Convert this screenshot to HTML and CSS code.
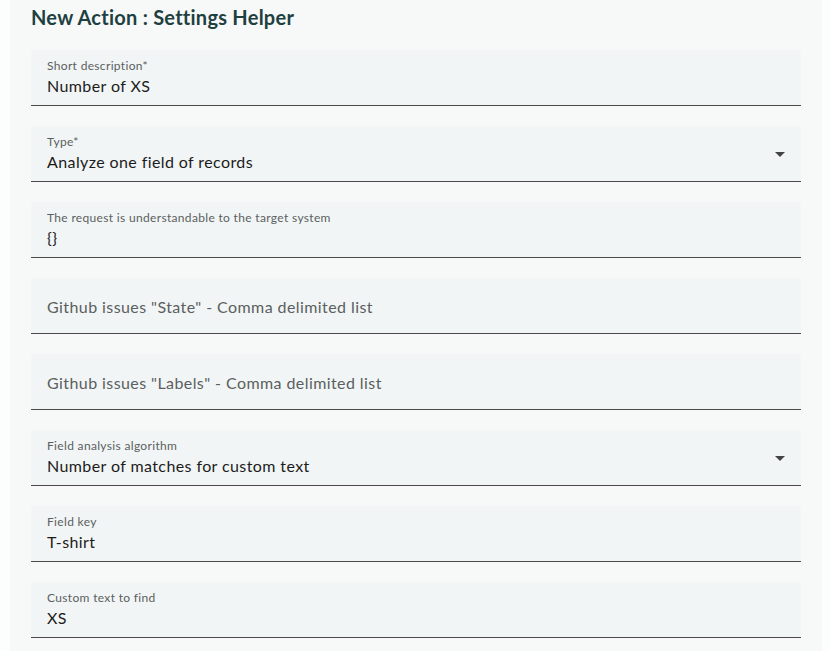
FILE: index.html
```html
<!DOCTYPE html>
<html>
<head>
<meta charset="utf-8">
<link rel="stylesheet" href="styles.css">
</head>
<body>
<div class="panel">
  <h1 class="title">New Action : Settings Helper</h1>
  <div class="field">
    <div class="label">Short description*</div>
    <div class="value">Number of XS</div>
  </div>
  <div class="field select">
    <div class="label">Type*</div>
    <div class="value">Analyze one field of records</div>
    <span class="arrow"></span>
  </div>
  <div class="field">
    <div class="label">The request is understandable to the target system</div>
    <div class="value">{}</div>
  </div>
  <div class="field empty">
    <div class="placeholder">Github issues "State" - Comma delimited list</div>
  </div>
  <div class="field empty">
    <div class="placeholder">Github issues "Labels" - Comma delimited list</div>
  </div>
  <div class="field select">
    <div class="label">Field analysis algorithm</div>
    <div class="value">Number of matches for custom text</div>
    <span class="arrow"></span>
  </div>
  <div class="field">
    <div class="label">Field key</div>
    <div class="value">T-shirt</div>
  </div>
  <div class="field">
    <div class="label">Custom text to find</div>
    <div class="value">XS</div>
  </div>
</div>
</body>
</html>
```
FILE: styles.css
```css
html, body {
  margin: 0;
  padding: 0;
  background: #fcfdfd;
  font-family: Lato, "Open Sans", sans-serif;
}
.panel {
  margin-left: 10px;
  width: 812px;
  box-sizing: border-box;
  padding: 0 21px 20px 21px;
  background: #f7f9f9;
  min-height: 651px;
}
.title {
  margin: 0;
  padding-top: 5px;
  height: 50px;
  box-sizing: border-box;
  font-size: 20px;
  font-weight: 700;
  letter-spacing: 0.25px;
  color: #1e4040;
  line-height: 24px;
}
.field {
  position: relative;
  height: 56px;
  box-sizing: border-box;
  background: #f2f5f5;
  border-bottom: 1px solid #4a4a4a;
  border-radius: 4px 4px 0 0;
  padding: 9px 16px 0 16px;
  margin-bottom: 20px;
}
.label {
  font-size: 12px;
  letter-spacing: 0.33px;
  line-height: 14px;
  color: #5a5f5f;
  height: 14px;
}
.value {
  margin-top: 3px;
  font-size: 16px;
  letter-spacing: 0.4px;
  line-height: 20px;
  color: #1c1c1c;
}
.field.empty {
  display: flex;
  align-items: center;
  padding-top: 2px;
}
.placeholder {
  font-size: 16px;
  letter-spacing: 0.42px;
  color: #5a5f5f;
  line-height: 20px;
}
.arrow {
  position: absolute;
  right: 16px;
  top: 26px;
  width: 0;
  height: 0;
  border-left: 5px solid transparent;
  border-right: 5px solid transparent;
  border-top: 5px solid #444;
}
```
